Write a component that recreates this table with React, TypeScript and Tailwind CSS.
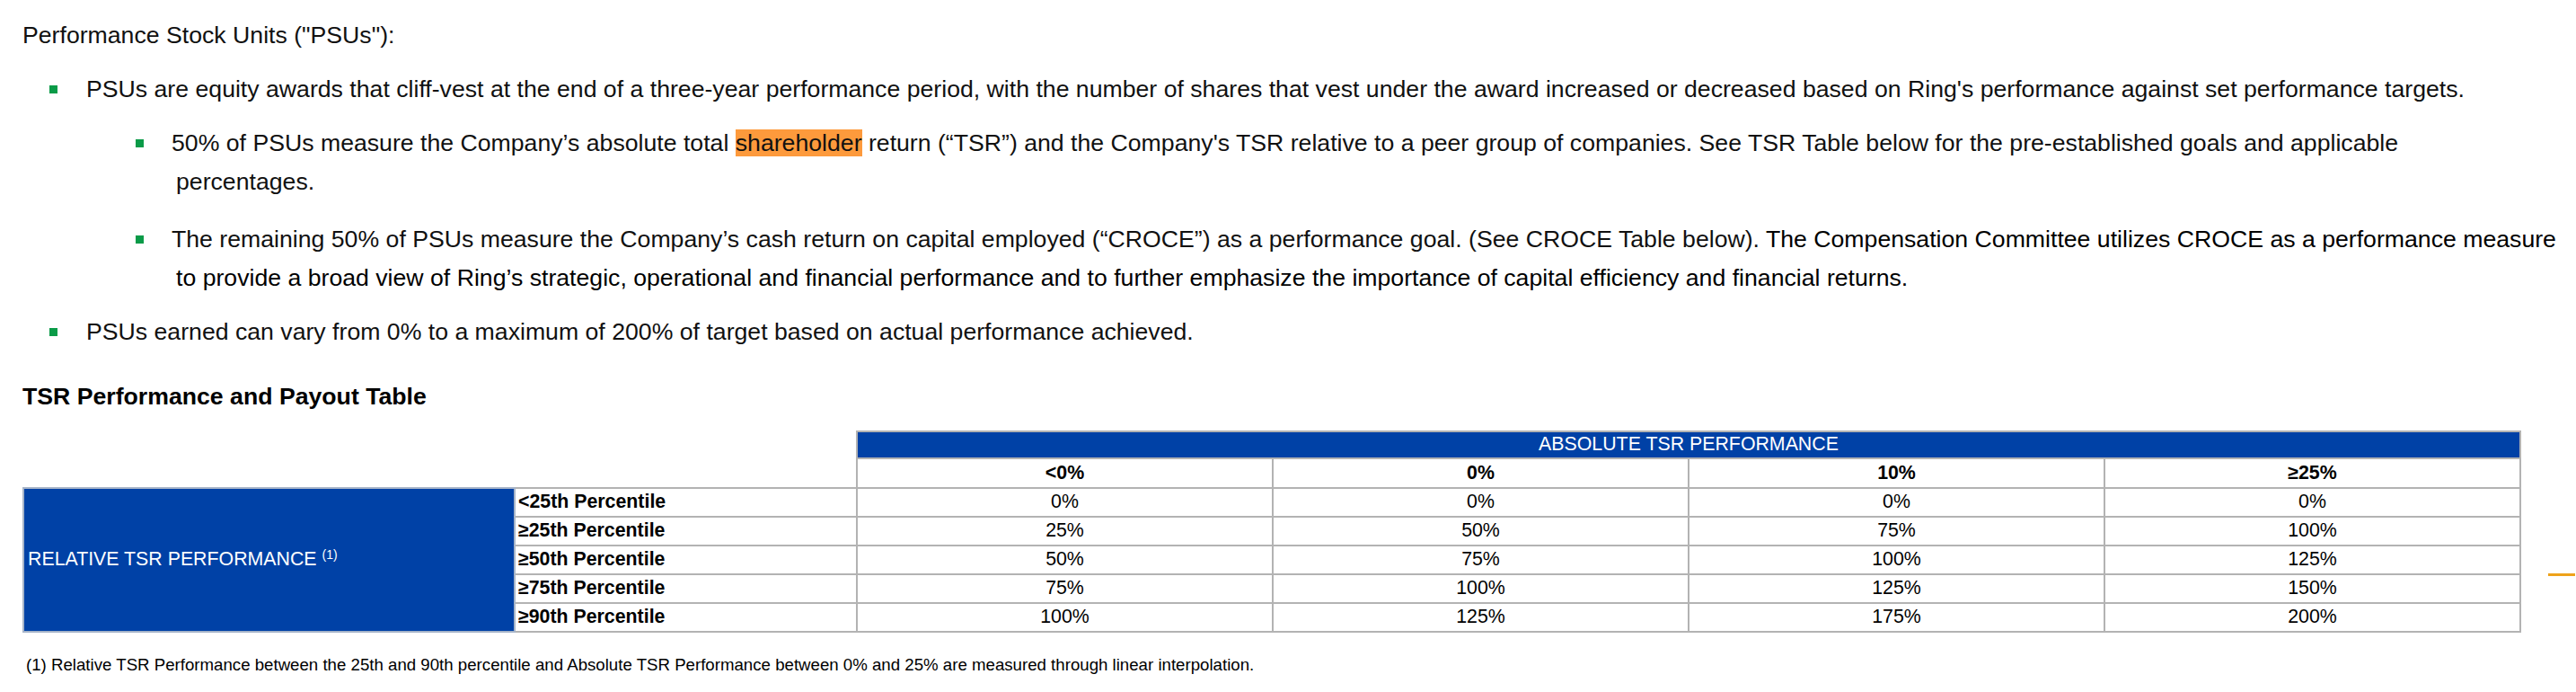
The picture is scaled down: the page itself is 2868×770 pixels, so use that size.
import React from 'react'

const rows = [
  ['<25th Percentile', '0%', '0%', '0%', '0%'],
  ['≥25th Percentile', '25%', '50%', '75%', '100%'],
  ['≥50th Percentile', '50%', '75%', '100%', '125%'],
  ['≥75th Percentile', '75%', '100%', '125%', '150%'],
  ['≥90th Percentile', '100%', '125%', '175%', '200%'],
]

const heads = ['<0%', '0%', '10%', '≥25%']

function Square() {
  return <span className="mt-[17px] w-[9px] h-[9px] bg-[#0a9b48] shrink-0" />
}

function Bullet({ children, className = '' }: { children: React.ReactNode; className?: string }) {
  return (
    <li className={'flex items-start pl-[30px] ' + className}>
      <Square />
      <div className="ml-[32px] whitespace-nowrap">{children}</div>
    </li>
  )
}

function SubBullet({ children, className = '' }: { children: React.ReactNode; className?: string }) {
  return (
    <li className={'flex items-start pl-[126px] ' + className}>
      <Square />
      <div className="ml-[36px] -indent-[5px] whitespace-nowrap">{children}</div>
    </li>
  )
}

function App() {
  return (
    <div className="relative w-[2868px] h-[770px] overflow-hidden bg-white text-[#111] font-['Liberation_Sans',Arial,sans-serif] pl-[25px] pt-[18px]">
      <p className="text-[26.67px] leading-[43px]">Performance Stock Units ("PSUs"):</p>
      <ul className="text-[26.67px] leading-[43px]">
        <Bullet className="mt-[17px]">
          PSUs are equity awards that cliff-vest at the end of a three-year performance period, with the number of shares that vest under the award increased or decreased based on Ring's performance against set performance targets.
        </Bullet>
        <SubBullet className="mt-[17px]">
          50% of PSUs measure the Company’s absolute total <span className="bg-[#fd9a3c]">shareholder</span> return (“TSR”) and the Company's TSR relative to a peer group of companies. See TSR Table below for the pre-established goals and applicable
          <br />
          percentages.
        </SubBullet>
        <SubBullet className="mt-[21px]">
          The remaining 50% of PSUs measure the Company’s cash return on capital employed (“CROCE”) as a performance goal. (See CROCE Table below). <span className="text-black">The Compensation Committee utilizes CROCE as a performance measure</span>
          <br />
          <span className="text-black">to provide a broad view of Ring’s strategic, operational and financial performance and to further emphasize the importance of capital efficiency and financial returns.</span>
        </SubBullet>
        <Bullet className="mt-[17px]">
          PSUs earned can vary from 0% to a maximum of 200% of target based on actual performance achieved.
        </Bullet>
      </ul>

      <h2 className="mt-[29px] text-[26.67px] leading-[43px] font-bold text-black">TSR Performance and Payout Table</h2>

      <table className="mt-[16px] w-[2779px] table-fixed border-collapse text-[21.33px] text-black">
        <colgroup>
          <col className="w-[547px]" />
          <col className="w-[381px]" />
          <col className="w-[463px]" />
          <col className="w-[463px]" />
          <col className="w-[463px]" />
          <col className="w-[463px]" />
        </colgroup>
        <tbody>
          <tr className="h-[30px]">
            <td />
            <td />
            <td colSpan={4} className="border-2 border-[#b3b3b3] bg-[#0041a6] text-white text-center leading-none">
              ABSOLUTE TSR PERFORMANCE
            </td>
          </tr>
          <tr className="h-[33px]">
            <td />
            <td />
            {heads.map((h) => (
              <td key={h} className="border-2 border-[#b3b3b3] text-center font-bold leading-none">
                {h}
              </td>
            ))}
          </tr>
          {rows.map((r, i) => (
            <tr key={i} className="h-[32px]">
              {i === 0 && (
                <td rowSpan={5} className="border-2 border-[#a6b4c8] bg-[#0041a6] text-white pl-[4px] leading-none">
                  RELATIVE TSR PERFORMANCE <sup className="text-[14px]">(1)</sup>
                </td>
              )}
              <td className="border-2 border-[#b3b3b3] font-bold pl-[3px] leading-none">{r[0]}</td>
              {r.slice(1).map((v, j) => (
                <td key={j} className="border-2 border-[#b3b3b3] text-center leading-none">
                  {v}
                </td>
              ))}
            </tr>
          ))}
        </tbody>
      </table>

      <p className="mt-[23px] pl-[4px] text-[18.67px] leading-[26px] text-black">
        (1) Relative TSR Performance between the 25th and 90th percentile and Absolute TSR Performance between 0% and 25% are measured through linear interpolation.
      </p>

      <div className="absolute left-[2837px] top-[638px] w-[30px] h-[3px] bg-[#eea21a]" />
    </div>
  )
}

export default App
